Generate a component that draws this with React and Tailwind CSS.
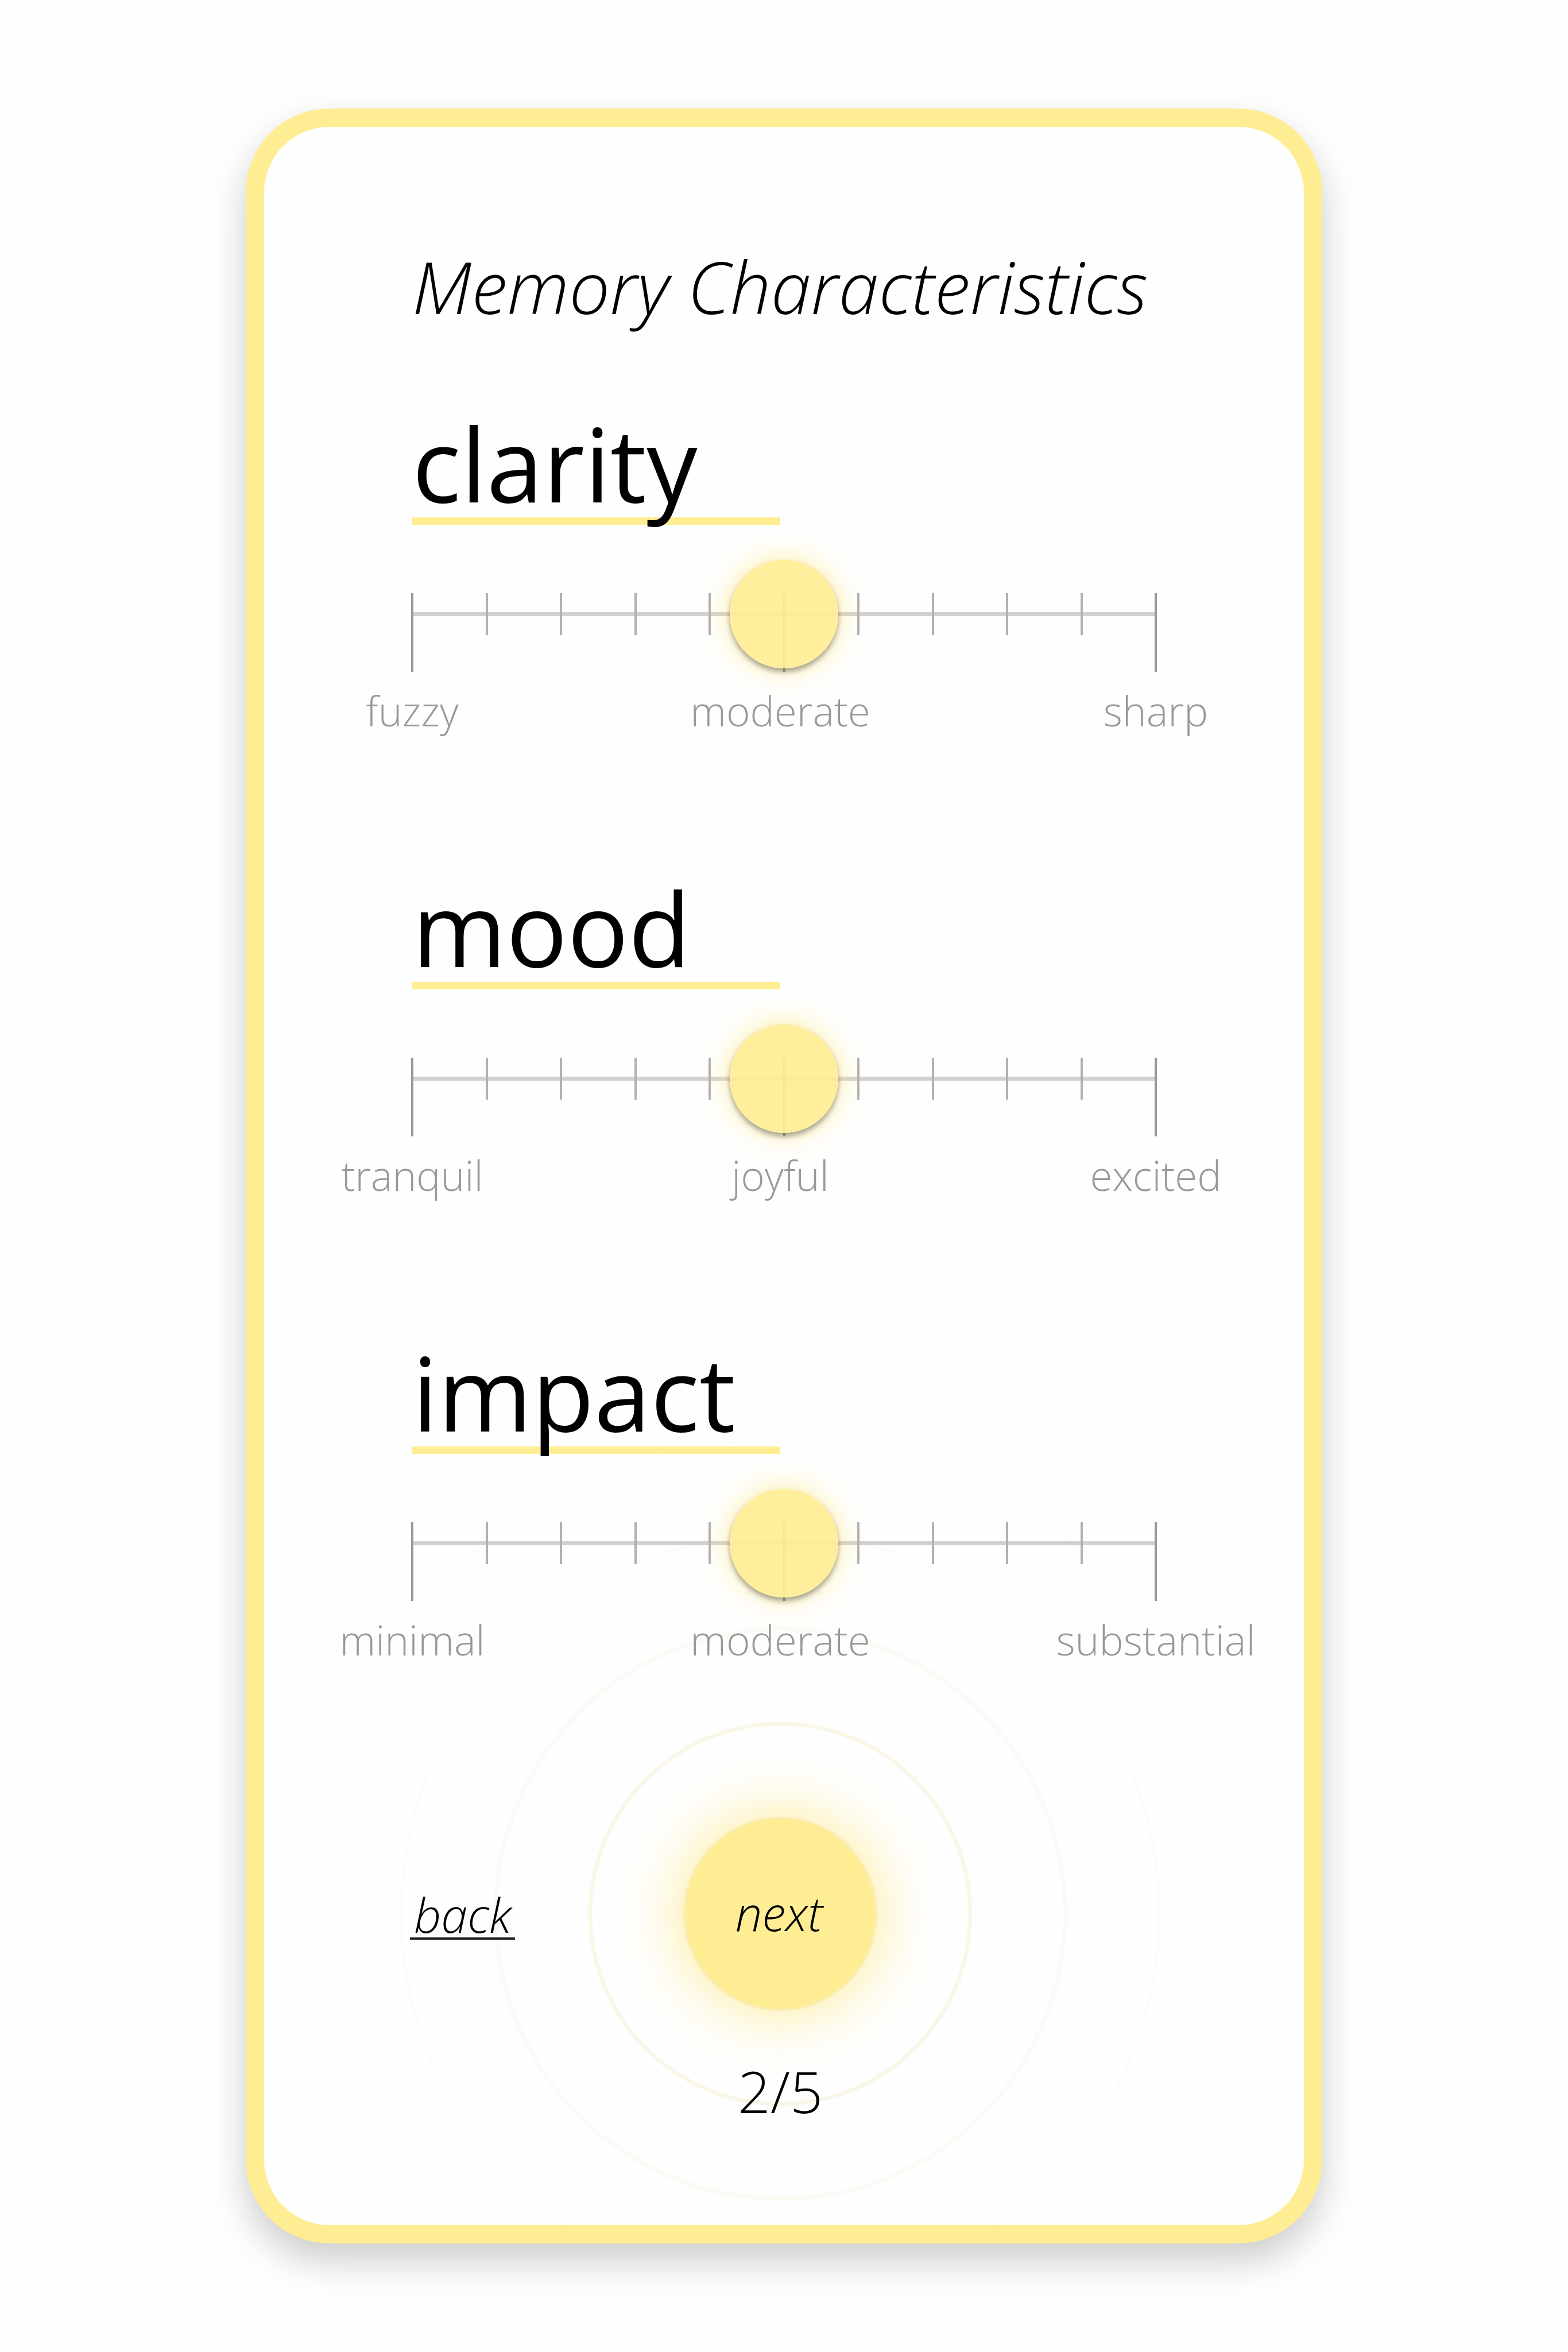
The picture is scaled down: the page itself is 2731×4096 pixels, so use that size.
const SCALES = [
  { name: "clarity", labels: ["fuzzy", "moderate", "sharp"] },
  { name: "mood", labels: ["tranquil", "joyful", "excited"] },
  { name: "impact", labels: ["minimal", "moderate", "substantial"] },
];

const TICKS = Array.from({ length: 11 }, (_, i) => i);

function Scale({ name, labels }) {
  return (
    <section className="h-[809px]">
      <div className="relative z-10 flex h-[200px] w-[641px] items-end border-b-[13px] border-[#ffed94]">
        <label htmlFor={name} className="-mb-[26px] text-[177px] leading-[240px] text-black">
          {name}
        </label>
      </div>
      <div className="relative mt-[61px] h-[189px]">
        <div className="absolute inset-x-0 top-[91px] h-[7px] bg-[#d1d1d1]" />
        <div className="absolute -inset-x-[2px] top-[58px] flex justify-between">
          {TICKS.map((i) => (
            <span
              key={i}
              className={i % 5 === 0 ? "h-[137px] w-1 bg-[#999999]" : "h-[73px] w-1 bg-[#b1b1b1]"}
            />
          ))}
        </div>
        <input
          id={name}
          type="range"
          min="0"
          max="10"
          defaultValue="5"
          className="absolute -inset-x-[95px] top-0 h-[189px] w-[1484px] cursor-pointer appearance-none bg-transparent outline-none [&::-webkit-slider-thumb]:size-[189px] [&::-webkit-slider-thumb]:appearance-none [&::-webkit-slider-thumb]:rounded-full [&::-webkit-slider-thumb]:bg-[#ffed94]/92 [&::-webkit-slider-thumb]:shadow-[0_6px_10px_rgba(0,0,0,0.35),0_0_50px_rgba(255,231,120,0.7)]"
        />
      </div>
      <div className="mt-[26px] grid grid-cols-[641px_1fr_0px] text-[71px] leading-[96px] font-light text-[#999999]">
        {labels.map((label) => (
          <span key={label} className="flex w-0 justify-center whitespace-nowrap">
            {label}
          </span>
        ))}
      </div>
    </section>
  );
}

function Rings() {
  return (
    <svg
      viewBox="-830 -830 1660 1660"
      className="pointer-events-none absolute top-1/2 left-1/2 -z-10 size-[1660px] -translate-1/2"
      fill="none"
      strokeWidth="7"
      aria-hidden="true"
    >
      <circle r="331" stroke="#faf7e8" />
      <circle r="496" stroke="#fbfaf5" />
      <circle r="660" stroke="#fdfcfb" />
      <circle r="825" stroke="#fcfefe" />
    </svg>
  );
}

export default function App() {
  return (
    <div className="flex min-h-screen justify-center bg-[#fefefe] px-[428px] py-[189px] font-['Open_Sans',sans-serif] text-black">
      <main className="isolate w-full max-w-[1875px] overflow-hidden rounded-[146px] border-[32px] border-[#ffed94] bg-[#fefefe] px-[258px] shadow-[0_30px_64px_rgba(0,0,0,0.2)]">
        <h1 className="mt-[189px] text-[126px] leading-[176px] font-light whitespace-nowrap italic">
          Memory Characteristics
        </h1>
        <div className="mt-[128px]">
          {SCALES.map((scale) => (
            <Scale key={scale.name} {...scale} />
          ))}
        </div>
        <nav className="mt-[23px] flex w-[1282px] items-center">
          <a
            href="#back"
            className="mt-[6px] -ml-1 w-[183px] border-b-4 border-[#231f20] text-center text-[83px] leading-[80px] font-light italic"
          >
            back
          </a>
          <div className="relative mx-auto">
            <Rings />
            <button className="block size-[338px] rounded-full border-4 border-[#fbecb0] bg-[#ffed94] pr-1 pb-1 text-[83px] font-light italic shadow-[0_0_110px_rgba(255,231,120,0.8)]">
              next
            </button>
          </div>
          <div className="w-[179px]" />
        </nav>
        <p className="mt-[71px] w-[1282px] text-center text-[100px] leading-[136px] font-light">2/5</p>
      </main>
    </div>
  );
}
